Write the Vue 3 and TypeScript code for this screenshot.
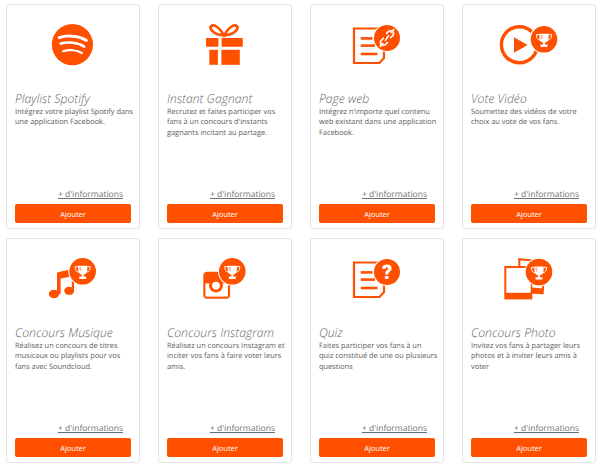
<script setup lang="ts">
interface Card { kind: string; title: string; text: string }
const cards: Card[] = [
  { kind: 'spotify', title: 'Playlist Spotify', text: 'Intégrez votre playlist Spotify dans une application Facebook.' },
  { kind: 'gift', title: 'Instant Gagnant', text: "Recrutez et faites participer vos fans à un concours d'instants gagnants incitant au partage." },
  { kind: 'page', title: 'Page web', text: "Intégrez n'importe quel contenu web existant dans une application Facebook." },
  { kind: 'video', title: 'Vote Vidéo', text: 'Soumettez des vidéos de votre choix au vote de vos fans.' },
  { kind: 'music', title: 'Concours Musique', text: 'Réalisez un concours de titres musicaux ou playlists pour vos fans avec Soundcloud.' },
  { kind: 'insta', title: 'Concours Instagram', text: 'Réalisez un concours Instagram et inciter vos fans à faire voter leurs amis.' },
  { kind: 'quiz', title: 'Quiz', text: 'Faites participer vos fans à un\nquiz constitué de une ou plusieurs questions' },
  { kind: 'photo', title: 'Concours Photo', text: 'Invitez vos fans à partager leurs photos et à inviter leurs amis à voter' },
]
const badges: Record<string, [number, number]> = {
  video: [82, 35.3],
  music: [76.7, 33.3],
  insta: [74.3, 33.3],
  photo: [77, 34],
}
const orange = '#ff5000'
</script>

<template>
  <div class="grid">
    <article v-for="c in cards" :key="c.kind" class="card">
      <svg class="icon" width="132" height="69" viewBox="1 1 132 69" aria-hidden="true">
        <g v-if="c.kind === 'spotify'">
          <circle cx="66.4" cy="40.6" r="20.6" :fill="orange" />
          <g fill="none" stroke="#fff" stroke-linecap="round">
            <path d="M53.2 33.6C61 31 73 31.6 80.4 36.4" stroke-width="3" />
            <path d="M54.8 39.6C62 37.6 72 38.2 78.2 42.6" stroke-width="2.6" />
            <path d="M57 47.2C63 45.4 71 45.8 75.8 49" stroke-width="2.2" />
          </g>
        </g>
        <g v-else-if="c.kind === 'gift'">
          <path d="M66 31.5C62 24 56 19.5 53 22.2C50.5 24.8 56 30.6 66 31.5C76 30.6 81.5 24.8 79 22.2C76 19.5 70 24 66 31.5Z" fill="none" :stroke="orange" stroke-width="2.6" />
          <path d="M49 34H60.4V42.8H49C48.4 42.8 48 42.4 48 41.8V35C48 34.4 48.4 34 49 34Z" :fill="orange" />
          <path d="M63.6 34H83.8C84.4 34 84.8 34.4 84.8 35V41.8C84.8 42.4 84.4 42.8 83.8 42.8H63.6Z" :fill="orange" />
          <rect x="51.3" y="45.8" width="8.6" height="15" :fill="orange" />
          <rect x="63.4" y="45.8" width="18.4" height="15" :fill="orange" />
        </g>
        <g v-else-if="c.kind === 'page' || c.kind === 'quiz'">
          <path d="M44 24.5H74V54L69.5 59H44Z" fill="#fff" :stroke="orange" stroke-width="2.2" />
          <g :stroke="orange" stroke-width="2.6">
            <path d="M50.7 34.4H62.5" />
            <path d="M50.7 41.6H65" />
            <path d="M50.7 50H67.5" />
          </g>
          <circle cx="77" cy="34" r="14" fill="#fff" />
          <circle cx="77" cy="34" r="13" :fill="orange" />
          <g v-if="c.kind === 'page'" fill="none" stroke="#fff" stroke-width="1.6" stroke-linecap="round">
            <path d="M70.2 42.4L72.8 39.6" />
            <path d="M83.8 25.6L81.2 28.4" />
            <path d="M76.6 29.4L78.4 27.6C79.8 26.4 82 26.6 83 28C83.8 29.2 83.6 30.8 82.6 31.8L80.6 33.8" />
            <path d="M77.4 38.6L75.6 40.4C74.2 41.6 72 41.4 71 40C70.2 38.8 70.4 37.2 71.4 36.2L73.4 34.2" />
            <path d="M75.4 36.4L78.6 31.6" />
          </g>
          <text v-else x="77" y="41" class="q">?</text>
        </g>
        <g v-else-if="c.kind === 'video'">
          <circle cx="57.4" cy="40.7" r="18" fill="none" :stroke="orange" stroke-width="3.4" />
          <path d="M52 33.2V48.8L65.6 41Z" :fill="orange" />
        </g>
        <g v-else-if="c.kind === 'music'">
          <ellipse cx="48" cy="56" rx="5.2" ry="4.2" :fill="orange" />
          <ellipse cx="63.2" cy="52.8" rx="5" ry="4" :fill="orange" />
          <path d="M51 34.6L68 30.6V52.8H65.8V38.4L54.6 40.6V56H51Z" :fill="orange" />
        </g>
        <g v-else-if="c.kind === 'insta'">
          <rect x="45.3" y="33.7" width="26.8" height="27" rx="4" :fill="orange" />
          <rect x="47.4" y="45.4" width="22.6" height="13.2" fill="#fff" />
          <circle cx="58" cy="47.6" r="7" :fill="orange" />
          <circle cx="58" cy="47.6" r="3.9" fill="#fff" />
        </g>
        <g v-else-if="c.kind === 'photo'">
          <path d="M57.2 21.2L82.8 23.4L80.6 55.2L58 53.4Z" fill="#fff" :stroke="orange" stroke-width="2" />
          <path d="M70 49.6L81.4 50.4L81 56.2L70 55.4Z" :fill="orange" />
          <rect x="42.3" y="28" width="28" height="33.4" :fill="orange" />
          <rect x="44.3" y="30" width="24.4" height="24.8" fill="#fff" />
        </g>
        <g v-if="badges[c.kind]" :transform="`translate(${badges[c.kind][0]} ${badges[c.kind][1]})`">
          <circle r="14.4" fill="#fff" />
          <circle r="13.3" :fill="orange" />
          <path d="M-4.6 -5.6H4.6V-1.6C4.6 1.2 2.6 3 .9 3.4V5.2H3.4V7.6H-3.4V5.2H-.9V3.4C-2.6 3 -4.6 1.2 -4.6 -1.6Z" fill="#fff" />
          <path d="M-4.6 -4.6H-7.6C-7.6 -1.6 -6.6 .4 -3.6 1M4.6 -4.6H7.6C7.6 -1.6 6.6 .4 3.6 1" fill="none" stroke="#fff" stroke-width="1" />
          <path d="M-3.4 -4.4H-1.6V-.4C-1.6 .6 -2.8 -.4 -3.4 -1.4Z" :fill="orange" opacity=".45" />
        </g>
      </svg>
      <div class="body">
        <h3 class="title">{{ c.title }}</h3>
        <p class="text">{{ c.text }}</p>
        <a class="more">+ d'informations</a>
        <button class="add" type="button">Ajouter</button>
      </div>
    </article>
  </div>
</template>

<style scoped>
.grid {
  width: 600px;
  height: 466px;
  box-sizing: border-box;
  padding: 4px 0 0 6px;
  display: grid;
  grid-template-columns: repeat(4, 134px);
  grid-auto-rows: 225px;
  column-gap: 18px;
  row-gap: 9px;
  background: #fff;
  font-family: "Open Sans", sans-serif;
  text-rendering: geometricPrecision;
  overflow: hidden;
}
.card {
  box-sizing: border-box;
  border: 1px solid #e3e3e3;
  border-radius: 3px;
  display: flex;
  flex-direction: column;
  background: #fff;
}
.icon { display: block; flex: none; }
.q {
  fill: #fff;
  font-family: Roboto, sans-serif;
  font-weight: 900;
  font-size: 20px;
  text-anchor: middle;
}
.body {
  flex: 1;
  min-height: 0;
  display: flex;
  flex-direction: column;
  padding: 17px 8px 5px;
}
.title {
  margin: 0;
  font-size: 12.2px;
  line-height: 16px;
  font-weight: 300;
  font-style: italic;
  color: #666;
  white-space: nowrap;
}
.text {
  margin: 0 -3px 0 0;
  font-size: 7.4px;
  line-height: 10.3px;
  color: #5c5c5c;
  white-space: pre-line;
}
.more {
  margin-top: auto;
  align-self: flex-end;
  margin-right: 8px;
  font-size: 8.5px;
  line-height: 13px;
  margin-bottom: 3px;
  color: #707070;
  text-decoration: underline;
}
.add {
  flex: none;
  height: 19px;
  padding: 0;
  border: none;
  border-radius: 2px;
  background: #ff5000;
  color: #fff;
  font-family: inherit;
  font-size: 7.5px;
}
</style>
